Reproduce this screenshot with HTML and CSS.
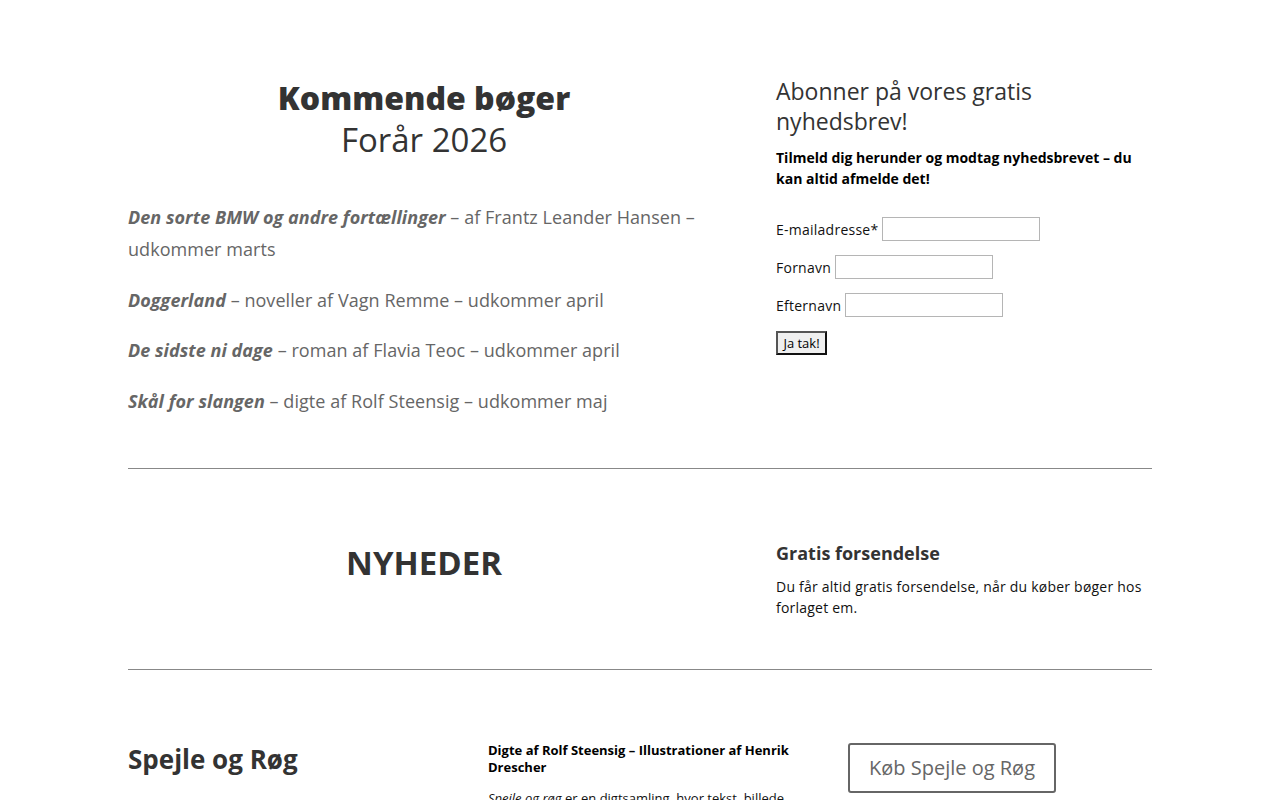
FILE: index.html
```html
<!DOCTYPE html>
<html lang="da">
<head>
<meta charset="utf-8">
<title>Forlaget em</title>
<link rel="stylesheet" href="styles.css">
</head>
<body>
<main class="page">
  <section class="row row-one">
    <div class="col-left">
      <h1 class="big-title"><strong>Kommende bøger</strong><br><span class="light">Forår 2026</span></h1>
      <div class="book-list">
        <p><em class="book">Den sorte BMW og andre fortællinger</em> – af Frantz Leander Hansen – udkommer marts</p>
        <p><em class="book">Doggerland</em> – noveller af Vagn Remme – udkommer april</p>
        <p><em class="book">De sidste ni dage</em> – roman af Flavia Teoc – udkommer april</p>
        <p><em class="book">Skål for slangen</em> – digte af Rolf Steensig – udkommer maj</p>
      </div>
    </div>
    <div class="col-right">
      <h2 class="sub-title">Abonner på vores gratis nyhedsbrev!</h2>
      <p class="intro">Tilmeld dig herunder og modtag nyhedsbrevet – du kan altid afmelde det!</p>
      <form class="signup">
        <div class="field"><label for="email">E-mailadresse*</label> <input id="email" type="text"></div>
        <div class="field"><label for="fname">Fornavn</label> <input id="fname" type="text"></div>
        <div class="field"><label for="lname">Efternavn</label> <input id="lname" type="text"></div>
        <button type="button" class="submit">Ja tak!</button>
      </form>
    </div>
  </section>
  <hr class="divider">
  <section class="row row-two">
    <div class="col-left">
      <h2 class="news-title">NYHEDER</h2>
    </div>
    <div class="col-right">
      <h3 class="small-title">Gratis forsendelse</h3>
      <p class="note">Du får altid gratis forsendelse, når du køber bøger hos forlaget em.</p>
    </div>
  </section>
  <hr class="divider">
  <section class="row-three">
    <div class="third">
      <h2 class="book-title">Spejle og Røg</h2>
    </div>
    <div class="third">
      <p class="byline">Digte af Rolf Steensig – Illustrationer af Henrik Drescher</p>
      <p class="desc"><em class="u">Spejle og røg</em> er en digtsamling, hvor tekst, billede og form spiller sammen.</p>
    </div>
    <div class="third">
      <a class="buy" href="#">Køb Spejle og Røg</a>
    </div>
  </section>
</main>
</body>
</html>
```

FILE: styles.css
```css
html, body {
  margin: 0;
  padding: 0;
  background: #fff;
}
body {
  font-family: "Open Sans", "Liberation Sans", sans-serif;
  font-size: 14px;
  line-height: 1.5;
  color: #666;
}
.page {
  width: 1024px;
  margin: 0 auto;
}
.row {
  display: grid;
  grid-template-columns: 592px 376px;
  column-gap: 56px;
  align-items: start;
}
.row-one {
  padding-top: 77px;
  padding-bottom: 33px;
}
.big-title {
  margin: 0;
  text-align: center;
  font-size: 32px;
  line-height: 42px;
  color: #333;
  font-weight: 700;
}
.big-title .light {
  font-weight: 400;
  font-size: 33px;
}
.book-list {
  margin-top: 40px;
}
.book-list p {
  margin: 0;
  padding-bottom: 18px;
  font-size: 18px;
  line-height: 32.4px;
  letter-spacing: 0.05px;
  color: #666;
}
.book {
  font-weight: 700;
  font-style: italic;
}
.row-one .col-right {
  margin-top: -1px;
}
.sub-title {
  margin: 0;
  font-size: 23px;
  line-height: 30px;
  font-weight: 400;
  color: #333;
}
.intro {
  margin: 10.5px 0 0;
  font-weight: 700;
  color: #000;
  line-height: 21px;
}
.signup {
  margin-top: 28.5px;
}
.field {
  display: flex;
  align-items: center;
  gap: 4px;
  height: 24px;
  margin-bottom: 14px;
  color: #111;
  letter-spacing: 0.25px;
}
.field input {
  box-sizing: border-box;
  width: 158px;
  height: 24px;
  border: 1px solid #b5b5b5;
  background: #fff;
  padding: 0 4px;
  margin: 0;
}
.submit {
  box-sizing: border-box;
  height: 24px;
  width: 51px;
  padding: 0;
  font-family: "Open Sans", "Liberation Sans", sans-serif;
  font-size: 13px;
  color: #000;
  background: #efefef;
  border: 2px solid;
  border-color: #555 #111 #111 #555;
  border-radius: 0;
}
.divider {
  margin: 0;
  border: 0;
  height: 1px;
  background: #888;
}
.row-two {
  padding-top: 72px;
  padding-bottom: 51px;
  height: 77px;
}
.news-title {
  margin: 1px 0 0;
  text-align: center;
  font-size: 33px;
  line-height: 42px;
  font-weight: 700;
  color: #333;
}
.small-title {
  margin: 0;
  font-size: 18px;
  line-height: 24px;
  font-weight: 700;
  color: #333;
}
.note {
  margin: 10.5px 0 0;
  color: #111;
  line-height: 21px;
  letter-spacing: 0.22px;
}
.row-three {
  display: grid;
  grid-template-columns: 304px 304px 304px;
  column-gap: 56px;
  padding-top: 72px;
  align-items: start;
}
.book-title {
  margin: 0;
  font-size: 26px;
  line-height: 34px;
  font-weight: 700;
  color: #333;
}
.byline {
  margin: 0;
  font-size: 13px;
  line-height: 17px;
  font-weight: 700;
  color: #000;
}
.desc {
  margin: 12px 0 0;
  color: #111;
  font-size: 13px;
  line-height: 20px;
}
.u {
  text-decoration: underline;
}
.buy {
  display: inline-block;
  margin-top: 1px;
  padding: 6px 19px;
  font-size: 20px;
  line-height: 34px;
  color: #666;
  text-decoration: none;
  border: 2px solid #666;
  border-radius: 3px;
}
```
